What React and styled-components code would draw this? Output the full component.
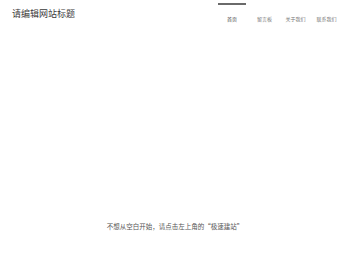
import React from "react";
import styled, { createGlobalStyle } from "styled-components";

const GlobalStyle = createGlobalStyle`
  html, body {
    margin: 0;
    padding: 0;
    background: #ffffff;
    font-family: "Noto Sans CJK SC", "Noto Sans", sans-serif;
  }
`;

const navItems = ["首页", "留言板", "关于我们", "联系我们"];

const App = () => {
  return (
    <>
      <GlobalStyle />
      <Page>
        <Header>
          <SiteTitle>请编辑网站标题</SiteTitle>
          <Nav>
            {navItems.map((item, i) => (
              <NavItem key={item} active={i === 0}>
                {item}
              </NavItem>
            ))}
          </Nav>
        </Header>
        <Main>
          <Hint>不想从空白开始，请点击左上角的“极速建站”</Hint>
        </Main>
      </Page>
    </>
  );
};

export default App;

const Page = styled.div`
  width: 350px;
  height: 263px;
  display: flex;
  flex-direction: column;
`;

const Header = styled.div`
  display: flex;
  justify-content: space-between;
  align-items: flex-start;
  padding: 0 8px 0 12px;
  height: 40px;
`;

const SiteTitle = styled.div`
  font-size: 9px;
  line-height: 12px;
  color: #3a3a3a;
  margin-top: 8px;
`;

const Nav = styled.div`
  display: flex;
`;

const NavItem = styled.div`
  width: 31px;
  box-sizing: border-box;
  text-align: center;
  font-size: 5px;
  line-height: 8px;
  color: ${(p) => (p.active ? "#444" : "#777")};
  padding-top: 10px;
  border-top: 2px solid ${(p) => (p.active ? "#6a6a6a" : "transparent")};
  margin-top: 3px;
  &:first-child {
    width: 28px;
    margin-right: 3px;
  }
`;

const Main = styled.div`
  flex: 1;
  display: flex;
  justify-content: center;
  padding-top: 181px;
`;

const Hint = styled.div`
  font-size: 6.5px;
  line-height: 10px;
  color: #555;
`;
